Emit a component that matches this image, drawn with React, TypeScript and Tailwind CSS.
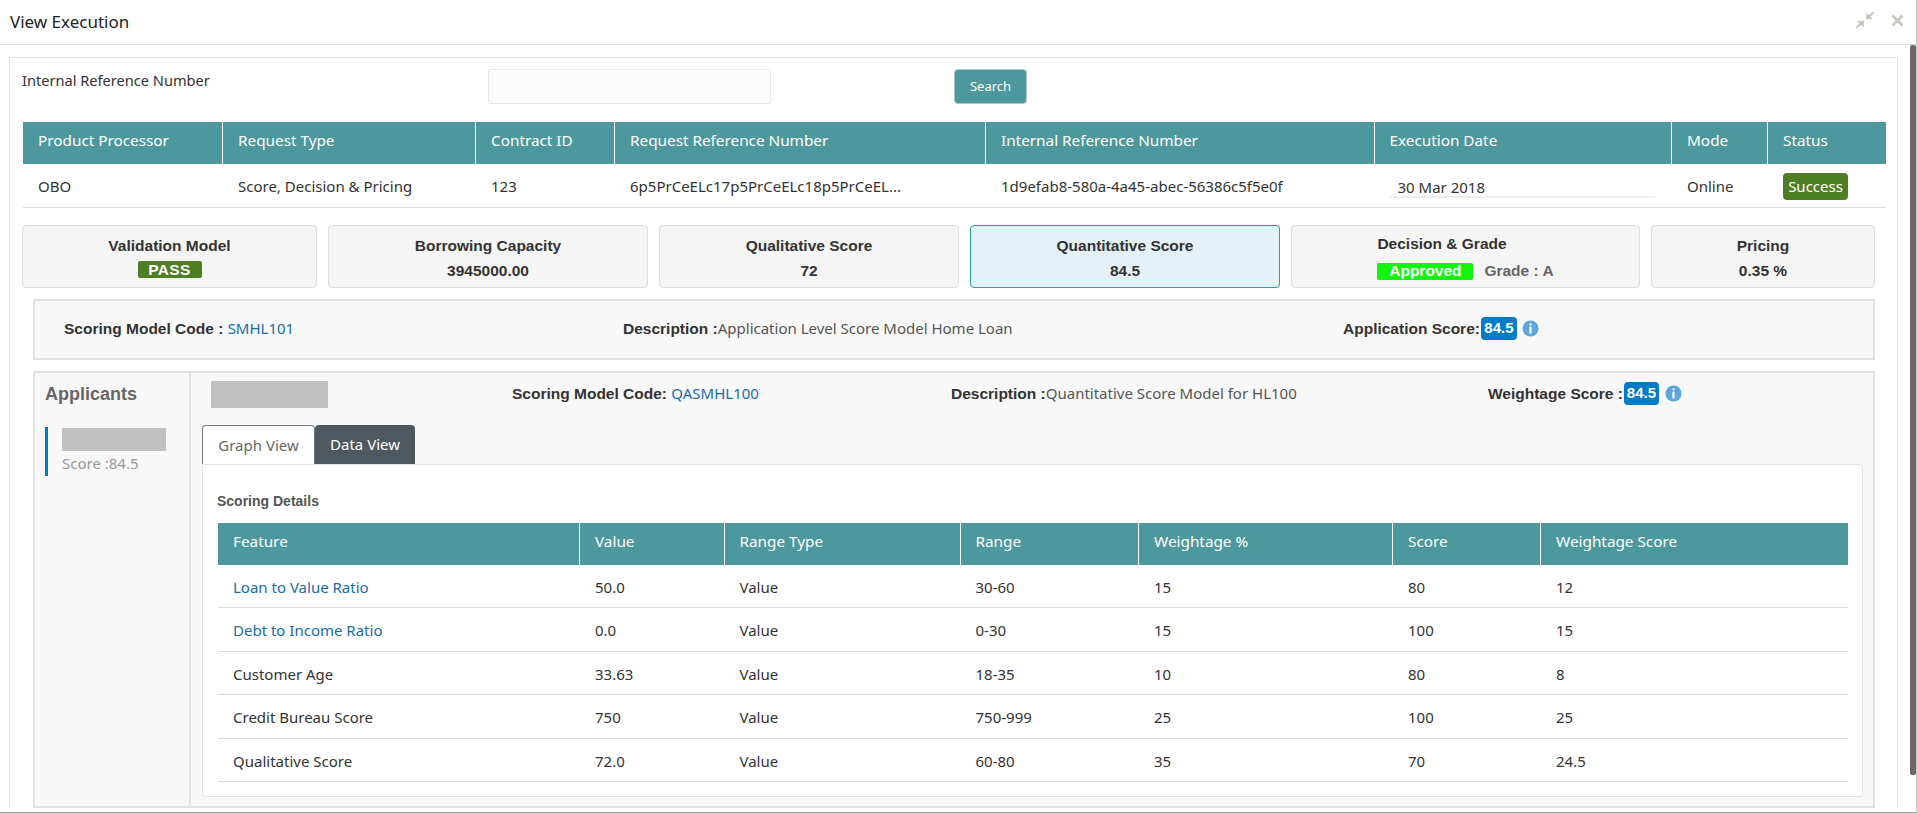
import React from "react";

const font = "font-['Noto_Sans','Open_Sans',sans-serif]";

function Info() {
  return (
    <svg width="17" height="17" viewBox="0 0 17 17" className="shrink-0">
      <circle cx="8.5" cy="8.5" r="8" fill="#5ba6dc" />
      <rect x="7.4" y="3.2" width="2.2" height="2.2" rx="1" fill="#fff" />
      <rect x="7.4" y="6.6" width="2.2" height="7" rx="0.6" fill="#fff" />
    </svg>
  );
}

function Card({ w, title, value, active }: { w: string; title: string; value: React.ReactNode; active?: boolean }) {
  return (
    <div className={`${w} h-[63px] shrink-0 rounded-[4px] border flex flex-col items-center pt-[10px] ${active ? "bg-[#e3f0f6] border-[#2a9d9d]" : "bg-[#f5f5f5] border-[#dddddd]"}`}>
      <div className="text-[15.5px] leading-[20px] font-bold text-[#333] font-['Liberation_Sans',sans-serif] whitespace-nowrap">{title}</div>
      <div className="mt-[5px] text-[15.5px] leading-[20px] font-bold text-[#333] font-['Liberation_Sans',sans-serif] whitespace-nowrap">{value}</div>
    </div>
  );
}

function Badge({ w }: { w: string }) {
  return (
    <span className={`${w} h-[23px] rounded-[4px] bg-[#007cc7] text-white font-bold text-[15px] font-['Liberation_Sans',sans-serif] flex items-center justify-center`}>84.5</span>
  );
}

const mainCols = [200, 253, 139, 371, 388.5, 297.5, 96, 118];
const mainHead = ["Product Processor", "Request Type", "Contract ID", "Request Reference Number", "Internal Reference Number", "Execution Date", "Mode", "Status"];
const subCols = [362, 144.5, 236, 178.5, 254, 148, 307];
const subHead = ["Feature", "Value", "Range Type", "Range", "Weightage %", "Score", "Weightage Score"];
const rows = [
  ["Loan to Value Ratio", "50.0", "Value", "30-60", "15", "80", "12"],
  ["Debt to Income Ratio", "0.0", "Value", "0-30", "15", "100", "15"],
  ["Customer Age", "33.63", "Value", "18-35", "10", "80", "8"],
  ["Credit Bureau Score", "750", "Value", "750-999", "25", "100", "25"],
  ["Qualitative Score", "72.0", "Value", "60-80", "35", "70", "24.5"],
];

function HeadRow({ cols, head }: { cols: number[]; head: string[] }) {
  return (
    <div className="flex h-[42px] shrink-0 bg-[#4c989c] text-white text-[15.3px]">
      {head.map((h, i) => (
        <div key={h} style={{ width: cols[i] }} className={`shrink-0 flex items-center pl-[15px] pb-[6px] whitespace-nowrap ${i < head.length - 1 ? "border-r border-[#ffffff]" : ""}`}>
          {h}
        </div>
      ))}
    </div>
  );
}

export default function App() {
  return (
    <div className={`${font} w-[1917px] h-[813px] overflow-hidden bg-white text-[#333] border-b border-[#a0a0a0] border-r border-r-[#c8c8c8] flex flex-col`}>
      <div className="h-[45px] shrink-0 border-b border-[#dcdfe3] flex items-center justify-between pl-[10px] pr-[12px]">
        <span className="text-[17px] text-[#222] pb-[1px]">View Execution</span>
        <div className="flex items-center gap-[16px] pb-[4px]">
          <svg width="20" height="20" viewBox="0 0 20 20" fill="#c9c6bf">
            <path d="M18.6 1.4 L19.6 2.6 L15.4 6.8 L18 9 L11 9.4 L11.4 2.4 L13.4 5 Z" />
            <path d="M1.4 18.6 L0.4 17.4 L4.6 13.2 L2 11 L9 10.6 L8.6 17.6 L6.6 15 Z" />
          </svg>
          <svg width="13" height="13" viewBox="0 0 13 13" stroke="#c9c6bf" strokeWidth="2.6" fill="none">
            <path d="M1.5 1.5 L11.5 11.5 M11.5 1.5 L1.5 11.5" />
          </svg>
        </div>
      </div>
      <div className="flex-1 flex min-h-0">
        <div className="w-[1910px] shrink-0 pl-[9px] pt-[12px] pr-[12px] pb-[4px] flex flex-col">
          <div className="flex-1 min-h-0 border-l border-t border-r border-[#dde3e8] pl-[13px] pr-[11px] flex flex-col">
            <div className="flex h-[64px] pt-[11px] shrink-0">
              <div className="w-[465px] text-[14.6px] text-[#333] -ml-[1px] mr-[1px] pt-[1px]">Internal Reference Number</div>
              <div className="w-[283px] h-[35px] border border-[#e6e6e6] bg-[#fcfcfc] rounded-[2px]"></div>
              <button className="ml-[183px] w-[73px] h-[35px] rounded-[4px] bg-[#4c989c] border border-[#a9c6c8] text-white text-[13px]">Search</button>
            </div>
            <HeadRow cols={mainCols} head={mainHead} />
            <div className="flex h-[44px] shrink-0 border-b border-[#dddddd] text-[15px] text-[#333]">
              {["OBO", "Score, Decision & Pricing", "123", "6p5PrCeELc17p5PrCeELc18p5PrCeEL...", "1d9efab8-580a-4a45-abec-56386c5f5e0f"].map((t, i) => (
                <div key={t} style={{ width: mainCols[i] }} className="shrink-0 pl-[15px] pt-[1px] flex items-center whitespace-nowrap">{t}</div>
              ))}
              <div style={{ width: mainCols[5] }} className="shrink-0 pl-[15px] pr-[17px] pt-[13px]">
                <div className="h-[21px] border-b-2 border-[#eeeeee] pl-[8px] leading-[20px]">30 Mar 2018</div>
              </div>
              <div style={{ width: mainCols[6] }} className="shrink-0 pl-[15px] pt-[1px] flex items-center">Online</div>
              <div style={{ width: mainCols[7] }} className="shrink-0 pl-[15px] pt-[9px]">
                <span className="flex items-center justify-center w-[65px] h-[27px] rounded-[4px] bg-[#4f7f25] text-white text-[15px]">Success</span>
              </div>
            </div>
            <div className="flex h-[63px] mt-[17px] shrink-0 gap-[11px] -ml-[1px]">
              <Card w="w-[295px]" title="Validation Model" value={<span className="flex items-center justify-center w-[64px] h-[17px] rounded-[2px] bg-[#4f7f25] text-white tracking-[0.3px]">PASS</span>} />
              <Card w="w-[320px]" title="Borrowing Capacity" value="3945000.00" />
              <Card w="w-[300px]" title="Qualitative Score" value="72" />
              <Card w="w-[310px]" title="Quantitative Score" value="84.5" active />
              <div className="w-[349px] h-[63px] shrink-0 rounded-[4px] border border-[#dddddd] bg-[#f5f5f5] flex flex-col items-center pt-[8px] font-['Liberation_Sans',sans-serif] font-bold text-[15.5px] text-[#333]">
                <div>
                  <div className="leading-[20px]">Decision &amp; Grade</div>
                  <div className="mt-[7px] flex items-center leading-[20px]">
                    <span className="w-[96px] h-[17px] rounded-[2px] bg-[#12f40c] text-white flex items-center justify-center">Approved</span>
                    <span className="ml-[11px] text-[#666]">Grade : A</span>
                  </div>
                </div>
              </div>
              <Card w="w-[224px]" title="Pricing" value="0.35 %" />
            </div>
            <div className="mt-[11px] ml-[10px] mr-[11px] h-[61px] shrink-0 border-2 border-[#e2e2e2] bg-[#f8f8f8] grid grid-cols-[559px_720px_1fr] items-center pl-[29px] pb-[2px] text-[15px]">
              <div className="whitespace-nowrap font-['Liberation_Sans',sans-serif]"><b className="text-[15.5px]">Scoring Model Code : </b><span className="text-[#1b6ca8] font-['Noto_Sans',sans-serif]">SMHL101</span></div>
              <div className="whitespace-nowrap font-['Liberation_Sans',sans-serif]"><b className="text-[15.5px]">Description :</b><span className="text-[#555] font-['Noto_Sans',sans-serif]">Application Level Score Model Home Loan</span></div>
              <div className="flex items-center font-['Liberation_Sans',sans-serif]"><b className="whitespace-nowrap text-[15.5px]">Application Score:</b><span className="ml-[1px]"><Badge w="w-[36px]" /></span><span className="ml-[5px]"><Info /></span></div>
            </div>
            <div className="mt-[11px] ml-[10px] mr-[11px] flex-1 min-h-0 border-2 border-[#e2e2e2] bg-[#f8f8f8] flex">
              <div className="w-[156px] shrink-0 border-r-2 border-[#e2e2e2] pl-[10px] pt-[8px]">
                <div className="text-[18px] leading-[26px] font-bold text-[#666] font-['Liberation_Sans',sans-serif]">Applicants</div>
                <div className="mt-[20px] border-l-[3px] border-[#007cc7] h-[49px] pl-[14px] pt-[1px]">
                  <div className="w-[104px] h-[23px] bg-[#c0c0c0]"></div>
                  <div className="text-[15px] leading-[20px] mt-[2px] text-[#999] whitespace-nowrap">Score :84.5</div>
                </div>
              </div>
              <div className="flex-1 min-w-0 pl-[11px] pr-[10px] flex flex-col">
                <div className="h-[52px] shrink-0 pl-[9px] grid grid-cols-[301px_439px_537px_1fr] pt-[8px] text-[15px]">
                  <div className="w-[117px] h-[27px] bg-[#c0c0c0]"></div>
                  <div className="whitespace-nowrap h-[23px] mt-[1px] flex items-center font-['Liberation_Sans',sans-serif]"><b className="text-[15.5px]">Scoring Model Code:&nbsp;</b><span className="text-[#1b6ca8] font-['Noto_Sans',sans-serif]">QASMHL100</span></div>
                  <div className="whitespace-nowrap h-[23px] mt-[1px] flex items-center font-['Liberation_Sans',sans-serif]"><b className="text-[15.5px]">Description :</b><span className="text-[#555] font-['Noto_Sans',sans-serif]">Quantitative Score Model for HL100</span></div>
                  <div className="whitespace-nowrap h-[23px] mt-[1px] flex items-center font-['Liberation_Sans',sans-serif]"><b className="text-[15.5px]">Weightage Score :</b><span className="ml-[1px]"><Badge w="w-[35px]" /></span><span className="ml-[6px]"><Info /></span></div>
                </div>
                <div className="h-[39px] shrink-0 flex text-[15px]">
                  <div className="w-[113px] h-[39px] border border-b-0 border-[#777] rounded-t-[4px] bg-white text-[#666] flex items-center justify-center">Graph View</div>
                  <div className="w-[100px] h-[39px] bg-[#50585f] rounded-t-[4px] text-white flex items-center justify-center">Data View</div>
                </div>
                <div className="h-[333px] shrink-0 bg-white border border-[#e2e2e2] rounded-b-[4px] rounded-tr-[4px] pl-[15px] pr-[14px]">
                  <div className="h-[58px] pt-[26px] -ml-[1px] text-[14px] leading-[20px] font-bold text-[#555] font-['Liberation_Sans',sans-serif]">Scoring Details</div>
                  <HeadRow cols={subCols} head={subHead} />
                  {rows.map((r, ri) => (
                    <div key={r[0]} className="flex h-[43.4px] items-center pt-[2px] border-b border-[#dddddd] text-[15px]">
                      {r.map((c, i) => (
                        <div key={i} style={{ width: subCols[i] }} className={`shrink-0 pl-[15px] whitespace-nowrap ${i === 0 && ri < 2 ? "text-[#1b6ca8]" : "text-[#333]"}`}>{c}</div>
                      ))}
                    </div>
                  ))}
                </div>
              </div>
            </div>
          </div>
        </div>
        <div className="w-[6px] h-[730px] shrink-0 bg-[#6e6566] rounded-[2px]"></div>
      </div>
    </div>
  );
}
